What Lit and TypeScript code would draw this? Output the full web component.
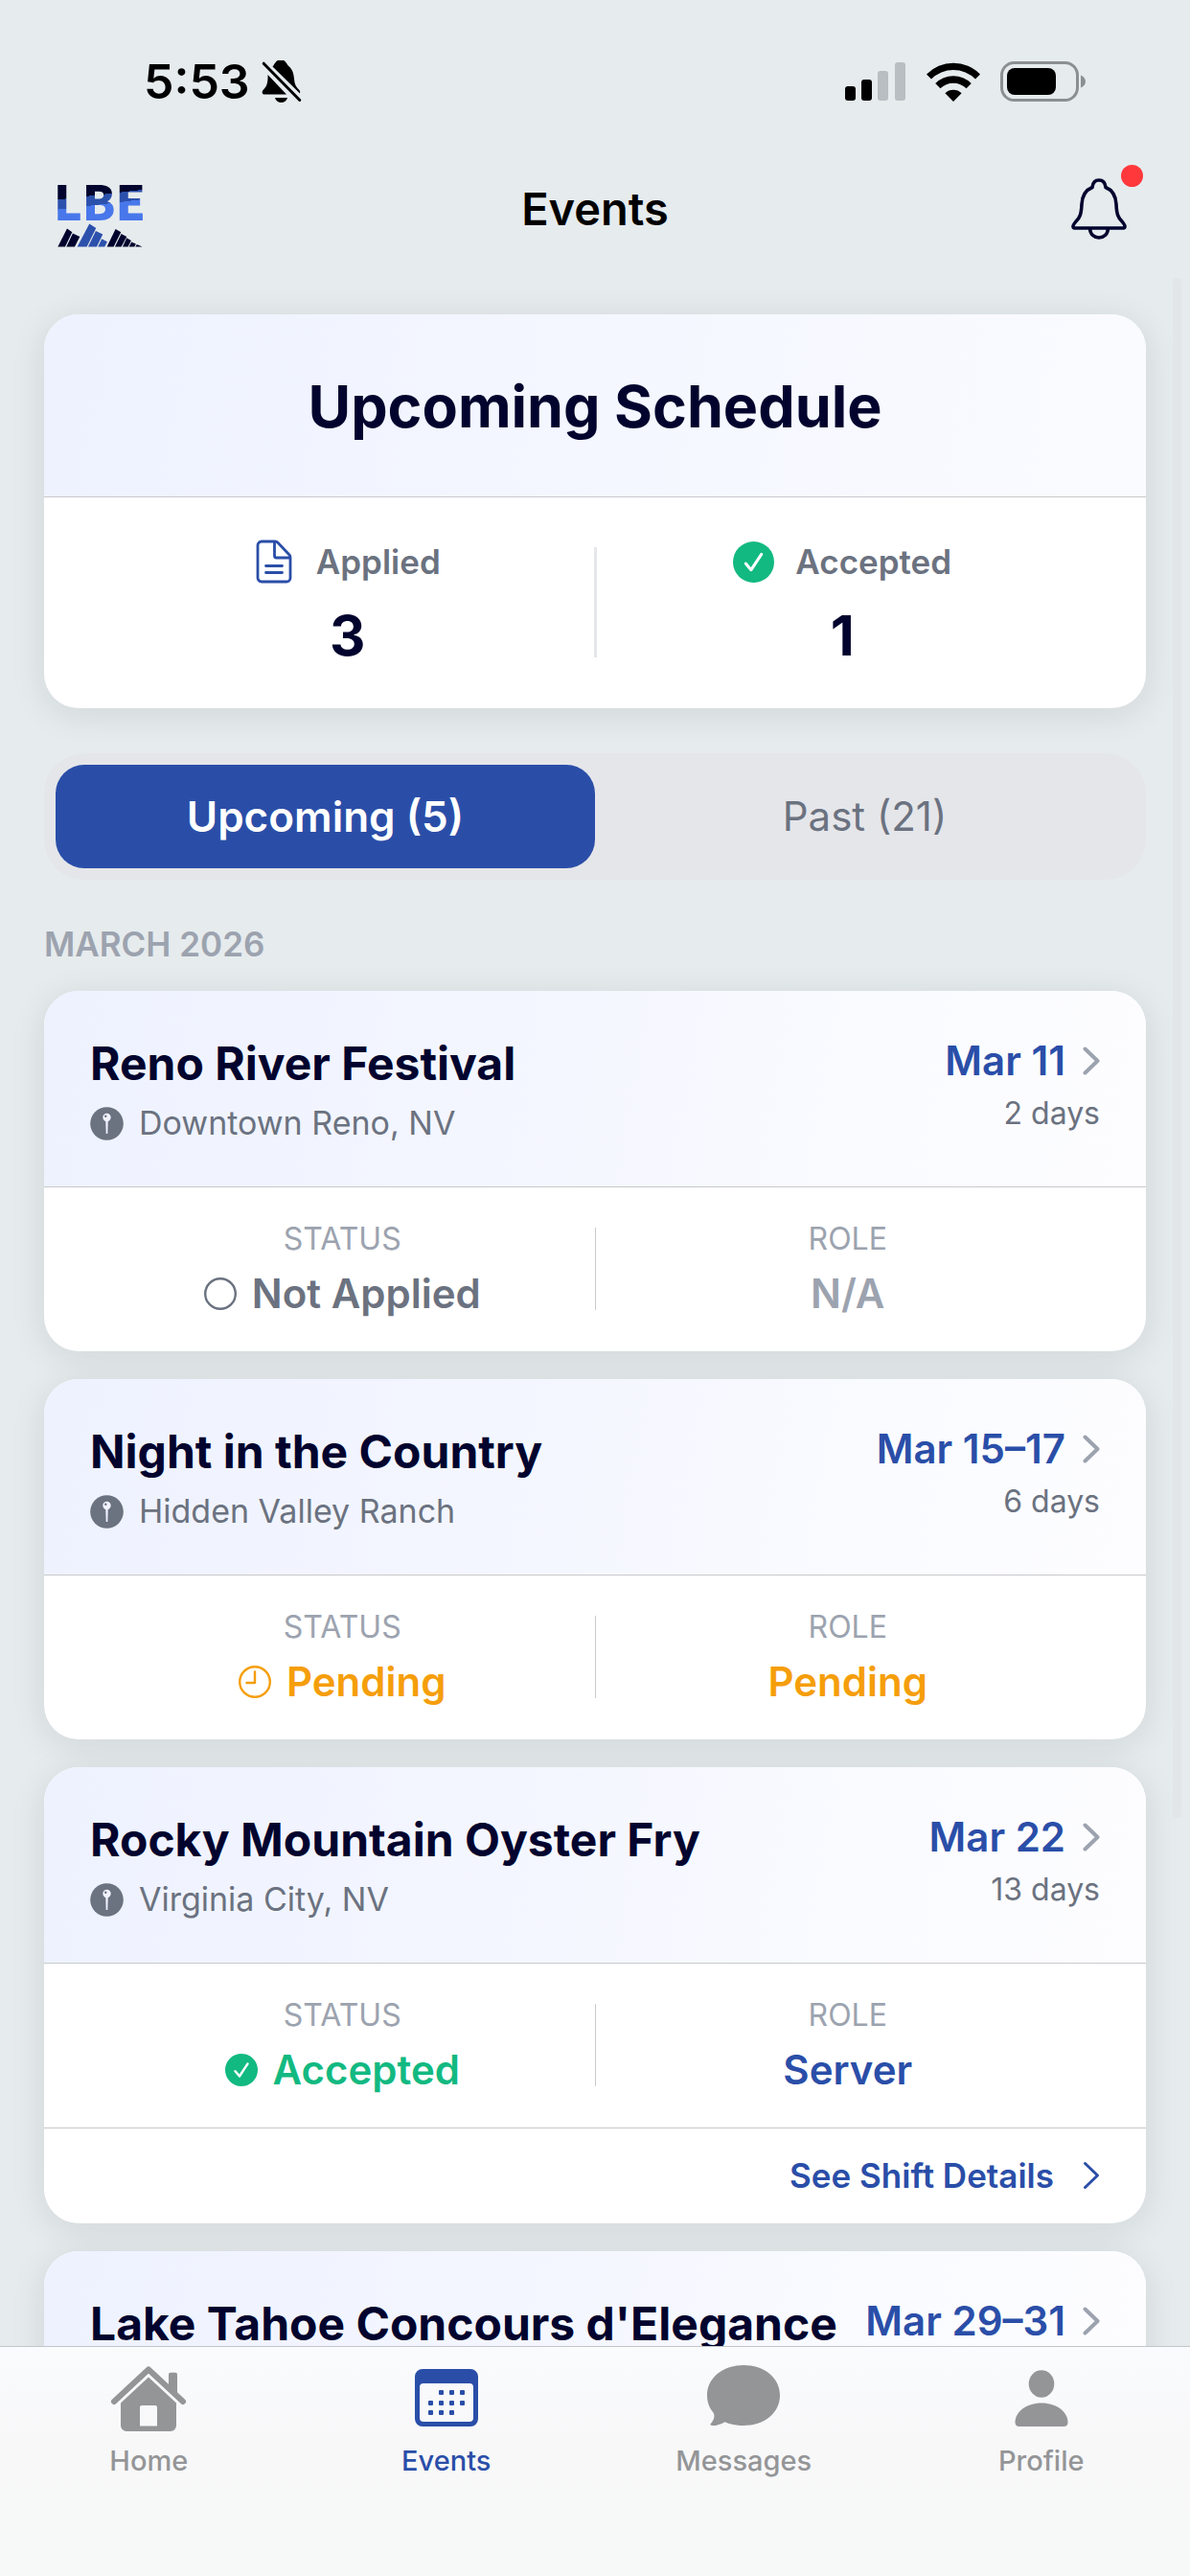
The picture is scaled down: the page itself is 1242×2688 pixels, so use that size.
import { LitElement, html, css, svg, nothing } from "lit";
import { customElement, property, state } from "lit/decorators.js";

type StatusKind = "none" | "pending" | "accepted";

interface EventItem {
  title: string;
  place?: string;
  date: string;
  days?: string;
  status?: StatusKind;
  role?: string;
}

const EVENTS: EventItem[] = [
  { title: "Reno River Festival", place: "Downtown Reno, NV", date: "Mar 11", days: "2 days", status: "none", role: "N/A" },
  { title: "Night in the Country", place: "Hidden Valley Ranch", date: "Mar 15–17", days: "6 days", status: "pending", role: "Pending" },
  { title: "Rocky Mountain Oyster Fry", place: "Virginia City, NV", date: "Mar 22", days: "13 days", status: "accepted", role: "Server" },
  { title: "Lake Tahoe Concours d'Elegance", date: "Mar 29–31" },
];

const STATUS_LABELS: Record<StatusKind, string> = {
  none: "Not Applied",
  pending: "Pending",
  accepted: "Accepted",
};

const checkCircle = (size: number) => html`
  <svg width=${size} height=${size} viewBox="0 0 42 42" aria-hidden="true">
    <circle cx="21" cy="21" r="21" fill="#12b981" />
    <path d="M13 22.5 L18.5 29 L29 13" fill="none" stroke="#fff" stroke-width="3" stroke-linecap="round" stroke-linejoin="round" />
  </svg>
`;

const emptyCircle = html`
  <svg width="34" height="34" viewBox="0 0 34 34" aria-hidden="true">
    <circle cx="17" cy="17" r="15.800" fill="none" stroke="#6b7280" stroke-width="2.400" />
  </svg>
`;

const clock = html`
  <svg width="34" height="34" viewBox="0 0 34 34" fill="none" stroke="#f59e0b" stroke-width="2.400" stroke-linecap="round" aria-hidden="true">
    <circle cx="17" cy="17" r="15.800" />
    <path d="M17 6.500V18H8.500" stroke-linejoin="round" />
  </svg>
`;

const pin = html`
  <svg width="35" height="35" viewBox="0 0 35 35" aria-hidden="true">
    <circle cx="17.500" cy="17.500" r="17.300" fill="#6b7280" />
    <circle cx="17.500" cy="11" r="4.200" fill="#f1f4fe" />
    <circle cx="16.300" cy="9.800" r="1.200" fill="#6b7280" />
    <path d="M16.300 14.500h2.400l-.4 13.500h-1.600z" fill="#f1f4fe" />
  </svg>
`;

const chevron = (color: string, width: number) => html`
  <svg width="18" height="30" viewBox="0 0 18 30" aria-hidden="true">
    <path d="M2.500 2.500 L15.500 15 L2.500 27.500" fill="none" stroke=${color} stroke-width=${width} stroke-linecap="round" stroke-linejoin="round" />
  </svg>
`;

const documentIcon = html`
  <svg width="42" height="46" viewBox="0 0 42 46" fill="none" stroke="#2a4ea8" stroke-width="2.800" stroke-linecap="round" stroke-linejoin="round" aria-hidden="true">
    <path d="M7 2h14a4 4 0 0 1 3 1.200L36 16a4 4 0 0 1 1 2.500V40a4 4 0 0 1-4 4H7a4 4 0 0 1-4-4V6a4 4 0 0 1 4-4z" />
    <path d="M20.500 2.500V17a2 2 0 0 0 2 2H36.500" />
    <path d="M11.500 27.500h17M11.500 34.500h17" />
  </svg>
`;

const bellSlash = html`
  <svg width="42" height="44" viewBox="0 0 42 44" aria-hidden="true">
    <path d="M11.500 6.500C13 5 12.800 4 14.500 2.300A6.500 6.500 0 0 1 25.500 2.300C27 4 27 5 28.500 6.200C32.500 9.500 33.500 14 34 19C34.400 25 36 27.500 39 30.500C40.200 32 40.400 33 40 34.500Z" fill="#000" />
    <path d="M6.500 15L26 35.500H3C1 35.500 0 33.500 1.200 31.500C4 28 6 27 6.500 19Z" fill="#000" />
    <path d="M14 39h13c-1 3.500-3.500 5-6.500 5s-5.500-1.500-6.500-5z" fill="#000" />
    <path d="M2.200 3.200L39.800 41.500" stroke="#000" stroke-width="3" stroke-linecap="round" />
  </svg>
`;

const signal = html`
  <svg width="64" height="42" viewBox="0 0 64 42" aria-hidden="true">
    <rect x="0" y="26" width="11" height="15" rx="3" />
    <rect x="17" y="19" width="11" height="22" rx="3" />
    <rect x="34" y="10" width="11" height="31" rx="3" fill="#b8bec1" />
    <rect x="52" y="1" width="11" height="40" rx="3" fill="#b8bec1" />
  </svg>
`;

const wifi = html`
  <svg width="56" height="42" viewBox="0 0 56 42" aria-hidden="true">
    <path d="M0 13.500A39 39 0 0 1 56 13.500L51 18.600A32.500 32.500 0 0 0 5 18.600Z" />
    <path d="M9.200 23A26.500 26.500 0 0 1 46.800 23L41.600 28.300A19.300 19.300 0 0 0 14.400 28.300Z" />
    <path d="M19.400 33.300A12.500 12.500 0 0 1 36.600 33.300L28 42Z" />
  </svg>
`;

const battery = html`
  <svg width="90" height="42" viewBox="0 0 90 42" aria-hidden="true">
    <rect x="1.500" y="1.500" width="79" height="39" rx="13" fill="none" stroke="#8b8f91" stroke-width="3" />
    <rect x="7" y="7" width="51" height="28" rx="8" />
    <path d="M84 14.500c3.500 1.500 5 4 5 6.500s-1.500 5-5 6.500z" fill="#8b8f91" />
  </svg>
`;

const bell = html`
  <svg width="58" height="64" viewBox="0 0 58 64" fill="none" stroke="#02042e" stroke-width="3.600" stroke-linejoin="round" aria-hidden="true">
    <path d="M22 9.500C22.500 5 25 2 29 2S35.500 5 36 9.500C43.500 12.500 46.500 19 47 27C47.500 38 49 41 53 45C55 47.500 56 49 56 50C56 51.300 55.500 52 54.500 52H3.500C2.500 52 2 51.300 2 50C2 49 3 47.500 5 45C9 41 10.500 38 11 27C11.500 19 14.500 12.500 22 9.500Z" />
    <path d="M19.500 52.500C20 58.500 24 62 29 62S38 58.500 38.500 52.500" />
  </svg>
`;

// Wordmark over a ridge of slanted bars
const logo = html`
  <svg class="logo" width="90" height="84" viewBox="0 0 90 84" role="img" aria-label="LBE">
    <defs>
      <linearGradient id="water" gradientUnits="userSpaceOnUse" x1="0" y1="12" x2="5" y2="54">
        <stop offset="0.480" stop-color="#02042e" />
        <stop offset="0.480" stop-color="#2c51ac" />
        <stop offset="0.720" stop-color="#2c51ac" />
        <stop offset="0.720" stop-color="#4777ea" />
      </linearGradient>
    </defs>
    <text class="wordmark" x="44" y="54" text-anchor="middle" fill="url(#water)">LBE</text>
    <g transform="translate(-20 -17) scale(0.333)">
      <g fill="#02042e">
        <path d="M61 296L90 239L106 250L84 296Z" />
        <path d="M88 296L108 254L130 264L114 296Z" />
        <path d="M215 296L242 240L259 250L236 296Z" />
        <path d="M240 296L260 255L277 264L260 296Z" />
        <path d="M264 296L277 268L291 276L281 296Z" />
        <path d="M284 296L292 281L306 287L301 296Z" />
        <path d="M304 296L309 288L326 296Z" />
      </g>
      <g fill="#2c51ac">
        <path d="M122 296L160 224L181 237L152 296Z" />
        <path d="M156 296L180 246L202 257L183 296Z" />
        <path d="M187 296L199 271L216 280L208 296Z" />
      </g>
    </g>
  </svg>
`;

const homeIcon = svg`
  <path d="M5 39L41 5.500L77 39" fill="none" stroke="currentColor" stroke-width="6" stroke-linecap="round" stroke-linejoin="round" />
  <path d="M62 26V10.500a1.800 1.800 0 0 1 1.800-1.800h5.400a1.800 1.800 0 0 1 1.800 1.800V34z" />
  <path fill-rule="evenodd" d="M41 13.500L70 40.500V64a6 6 0 0 1-6 6H18a6 6 0 0 1-6-6V40.500zM34 43a2 2 0 0 0-2 2v19.500h18V45a2 2 0 0 0-2-2z" />
`;

const dots = [
  [26, 25], [37, 25], [48, 25],
  [15, 36], [26, 36], [37, 36], [48, 36],
  [15, 46], [26, 46], [37, 46],
];

const calendarIcon = svg`
  <path fill-rule="evenodd" d="M16 5h50a8 8 0 0 1 8 8v44a8 8 0 0 1-8 8H16a8 8 0 0 1-8-8V13a8 8 0 0 1 8-8zM17 20a4 4 0 0 0-4 4v32a4 4 0 0 0 4 4h48a4 4 0 0 0 4-4V24a4 4 0 0 0-4-4z" />
  ${dots.map(([x, y]) => svg`<rect x=${x + 7} y=${y + 2} width="5" height="5" rx="1" />`)}
`;

const messageIcon = svg`
  <path d="M41 1C62.500 1 79 14 79 32.500S62.500 64 41 64C34 64 27 62.800 21.500 60.200C17 63 11 64.500 8 64C6 63.700 6 62.300 7.500 61.200C10 58.500 11.500 54 9.500 50.500C5 45.500 3 39 3 32.500C3 14 19.500 1 41 1z" />
`;

const profileIcon = svg`
  <ellipse cx="41" cy="20.500" rx="13.300" ry="14.300" />
  <path d="M41 40.500C57 40.500 68.500 50 68.500 60.500C68.500 63.500 67 65 64 65H18C15 65 13.500 63.500 13.500 60.500C13.500 50 25 40.500 41 40.500z" />
`;

const TABS = [
  { label: "Home", icon: homeIcon },
  { label: "Events", icon: calendarIcon },
  { label: "Messages", icon: messageIcon },
  { label: "Profile", icon: profileIcon },
];

@customElement("event-card")
export class EventCard extends LitElement {
  @property({ attribute: false }) declare event: EventItem;

  static override styles = css`
    :host {
      display: block;
    }

    .card {
      border-radius: 36px;
      background: #fff;
      box-shadow: 0 6px 36px rgba(20, 40, 50, 0.1);
      overflow: hidden;
    }

    .head {
      display: flex;
      justify-content: space-between;
      gap: 24px;
      min-height: 114px;
      padding: 48px 48px 42px;
      background: linear-gradient(100deg, #eef2ff, #f5f7ff 50%, #fafbff 75%, #fdfdff);
    }

    h3 {
      margin: 0 0 10px;
      font-size: 48px;
      font-weight: 700;
      line-height: 56px;
      color: #02042e;
      white-space: nowrap;
    }

    .place {
      display: flex;
      align-items: center;
      gap: 16px;
      font-size: 34px;
      line-height: 48px;
      color: #6b7280;
    }

    .when {
      display: flex;
      flex-direction: column;
      align-items: flex-end;
      gap: 8px;
    }

    .date {
      display: flex;
      align-items: center;
      gap: 18px;
      font-size: 42px;
      font-weight: 600;
      line-height: 50px;
      color: #2a4ea8;
      text-decoration: none;
      white-space: nowrap;
    }

    .days {
      font-size: 32px;
      line-height: 44px;
      color: #6b7280;
    }

    .body {
      display: grid;
      grid-template-columns: 1fr 1px 1fr;
      padding: 36px 48px 33px;
      border-top: 1px solid #c8c9cc;
    }

    .cell {
      display: flex;
      flex-direction: column;
      align-items: center;
      gap: 12px;
    }

    .label {
      font-size: 32px;
      line-height: 36px;
      color: #9ca3af;
    }

    .value {
      display: flex;
      align-items: center;
      gap: 16px;
      font-size: 42px;
      font-weight: 600;
      line-height: 54px;
      color: #2a4ea8;
    }

    .value.none {
      color: #6b7280;
    }

    .role.none {
      color: #9ca3af;
    }

    .value.pending {
      color: #f59e0b;
    }

    .status.accepted {
      color: #12b981;
    }

    .rule {
      margin: 6px 0 10px;
      background: #c8c9cc;
    }

    .details {
      display: flex;
      align-items: center;
      justify-content: flex-end;
      gap: 30px;
      padding: 25px 48px 26px;
      border-top: 1px solid #c8c9cc;
      font-size: 35px;
      font-weight: 600;
      line-height: 48px;
      color: #2a4ea8;
      text-decoration: none;
    }
  `;

  private _renderStatusIcon(status: StatusKind) {
    if (status === "accepted") return checkCircle(34);
    if (status === "pending") return clock;
    return emptyCircle;
  }

  private _renderBody(status: StatusKind) {
    return html`
      <div class="body">
        <div class="cell">
          <div class="label">STATUS</div>
          <div class="value status ${status}">
            ${this._renderStatusIcon(status)} ${STATUS_LABELS[status]}
          </div>
        </div>
        <div class="rule"></div>
        <div class="cell">
          <div class="label">ROLE</div>
          <div class="value role ${status}">${this.event.role}</div>
        </div>
      </div>
      ${status === "accepted"
        ? html`<a class="details" href="#shift">See Shift Details ${chevron("#2a4ea8", 3)}</a>`
        : nothing}
    `;
  }

  override render() {
    const { title, place, date, days, status } = this.event;
    return html`
      <article class="card">
        <div class="head">
          <div>
            <h3>${title}</h3>
            ${place ? html`<div class="place">${pin} ${place}</div>` : nothing}
          </div>
          <div class="when">
            <a class="date" href="#event">${date} ${chevron("#9ca3af", 4)}</a>
            ${days ? html`<div class="days">${days}</div>` : nothing}
          </div>
        </div>
        ${status ? this._renderBody(status) : nothing}
      </article>
    `;
  }
}

@customElement("app-root")
export class AppRoot extends LitElement {
  @state() private declare _filter: "upcoming" | "past";

  constructor() {
    super();
    this._filter = "upcoming";
  }

  static override styles = css`
    :host {
      display: flex;
      flex-direction: column;
      height: 100vh;
      background: #e6ebed;
      color: #000;
      font-family: Inter, "Liberation Sans", sans-serif;
    }

    button {
      border: 0;
      padding: 0;
      background: none;
      font: inherit;
      color: inherit;
    }

    .status-bar {
      display: flex;
      align-items: center;
      justify-content: space-between;
      height: 50px;
      padding: 60px 108px 50px 150px;
    }

    .clock,
    .indicators {
      display: flex;
      align-items: center;
      gap: 12px;
      font-size: 50px;
      font-weight: 600;
      line-height: 50px;
    }

    .indicators {
      gap: 21px;
    }

    .nav {
      display: grid;
      grid-template-columns: 1fr auto 1fr;
      align-items: center;
      height: 116px;
      padding: 0 60px;
    }

    .logo {
      overflow: visible;
    }

    .wordmark {
      font-family: "Noto Sans CJK SC", "Noto Sans", sans-serif;
      font-size: 50px;
      font-weight: 900;
    }

    h1 {
      margin: 0;
      font-size: 47px;
      font-weight: 600;
      line-height: 60px;
    }

    .alerts {
      position: relative;
      justify-self: end;
      display: flex;
      align-items: center;
      justify-content: center;
      width: 70px;
      height: 84px;
    }

    .badge {
      position: absolute;
      top: -4px;
      right: -11px;
      width: 23px;
      height: 23px;
      border-radius: 50%;
      background: #ff383c;
    }

    main {
      position: relative;
      flex: 1;
      min-height: 0;
      overflow-y: auto;
      scrollbar-width: none;
      padding: 52px 46px 0;
    }

    .thumb {
      position: absolute;
      top: 14px;
      right: 9px;
      width: 9px;
      height: 74%;
      border-radius: 5px;
      background: #e2e6e9;
    }

    .summary {
      border-radius: 36px;
      background: #fff;
      box-shadow: 0 6px 36px rgba(20, 40, 50, 0.1);
      overflow: hidden;
    }

    .summary h2 {
      margin: 0;
      padding: 56px 48px 54px;
      background: linear-gradient(100deg, #eef2ff, #f4f7ff 50%, #fafbff);
      font-size: 61px;
      font-weight: 700;
      line-height: 80px;
      text-align: center;
      color: #02042e;
    }

    .stats {
      display: grid;
      grid-template-columns: 1fr 3px 1fr;
      padding: 37px 60px 40px;
      border-top: 1px solid #c8c9cc;
    }

    .stat {
      display: flex;
      flex-direction: column;
      align-items: center;
      gap: 11px;
    }

    .stat-label {
      display: flex;
      align-items: center;
      gap: 22px;
      font-size: 35px;
      font-weight: 600;
      line-height: 60px;
      color: #6b7280;
    }

    .stat-value {
      font-size: 58px;
      font-weight: 700;
      line-height: 72px;
      color: #02042e;
    }

    .stat-rule {
      margin: 15px 0 13px;
      background: #e5e7eb;
    }

    .segments {
      display: grid;
      grid-template-columns: 1fr 1fr;
      margin-top: 47px;
      padding: 12px;
      border-radius: 42px;
      background: #e5e6ea;
    }

    .segment {
      border-radius: 30px;
      font-size: 42px;
      line-height: 108px;
      color: #6b7280;
    }

    .segment.active {
      background: #2a4ea8;
      font-size: 44px;
      font-weight: 600;
      color: #fff;
    }

    .month {
      margin: 43px 0 25px;
      font-size: 35px;
      font-weight: 600;
      line-height: 48px;
      color: #9ca3af;
    }

    .list {
      display: flex;
      flex-direction: column;
      gap: 29px;
    }

    .tabs {
      position: relative;
      display: grid;
      grid-template-columns: repeat(4, 1fr);
      min-height: 221px;
      padding-top: 18px;
      border-top: 1px solid #c3c5c6;
      background: linear-gradient(#fafbfd, #f8f8f9 40%, #f7f8f8);
    }

    .tab {
      display: flex;
      flex-direction: column;
      align-items: center;
      gap: 11px;
      font-size: 29px;
      font-weight: 500;
      line-height: 36px;
      color: #949597;
      text-decoration: none;
    }

    .tab.active {
      color: #2a4ea8;
    }
  `;

  private _renderSegment(key: "upcoming" | "past", label: string) {
    return html`
      <button
        class="segment ${this._filter === key ? "active" : ""}"
        @click=${() => (this._filter = key)}
      >
        ${label}
      </button>
    `;
  }

  override render() {
    return html`
      <div class="status-bar">
        <div class="clock">5:53 ${bellSlash}</div>
        <div class="indicators">${signal} ${wifi} ${battery}</div>
      </div>
      <header class="nav">
        ${logo}
        <h1>Events</h1>
        <button class="alerts" aria-label="Notifications">
          ${bell}
          <span class="badge"></span>
        </button>
      </header>
      <main>
        <div class="thumb"></div>
        <section class="summary">
          <h2>Upcoming Schedule</h2>
          <div class="stats">
            <div class="stat">
              <div class="stat-label">${documentIcon} Applied</div>
              <div class="stat-value">3</div>
            </div>
            <div class="stat-rule"></div>
            <div class="stat">
              <div class="stat-label">${checkCircle(43)} Accepted</div>
              <div class="stat-value">1</div>
            </div>
          </div>
        </section>
        <div class="segments">
          ${this._renderSegment("upcoming", "Upcoming (5)")}
          ${this._renderSegment("past", "Past (21)")}
        </div>
        <h2 class="month">MARCH 2026</h2>
        <div class="list">
          ${EVENTS.map((event) => html`<event-card .event=${event}></event-card>`)}
        </div>
      </main>
      <nav class="tabs">
        ${TABS.map(
          ({ label, icon }) => html`
            <a class="tab ${label === "Events" ? "active" : ""}" href="#${label.toLowerCase()}">
              <svg width="82" height="72" viewBox="0 0 82 72" fill="currentColor" aria-hidden="true">${icon}</svg>
              ${label}
            </a>
          `
        )}
      </nav>
    `;
  }
}

declare global {
  interface HTMLElementTagNameMap {
    "app-root": AppRoot;
    "event-card": EventCard;
  }
}
